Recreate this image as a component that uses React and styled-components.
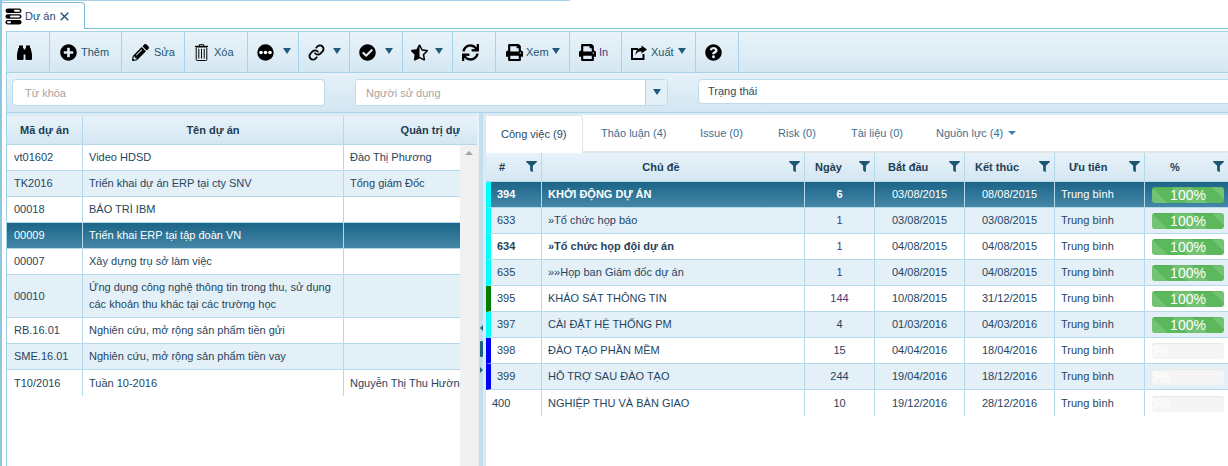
import React from "react";
import styled, { createGlobalStyle } from "styled-components";
import {
  FaPlusCircle,
  FaPencilAlt,
  FaCheckCircle,
  FaStarHalfAlt,
  FaSync,
  FaPrint,
  FaQuestionCircle,
  FaFilter,
} from "react-icons/fa";
import { Link as LinkIcon } from "lucide-react";

const GlobalStyle = createGlobalStyle`
  html, body {
    margin: 0;
    padding: 0;
    background: #fff;
    overflow: hidden;
  }
  * {
    box-sizing: border-box;
  }
`;

const Page = styled.div`
  width: 1228px;
  height: 466px;
  overflow: hidden;
  display: flex;
  flex-direction: column;
  border-left: 2px solid #8cc6e2;
  font-family: "Liberation Sans", Arial, sans-serif;
  font-size: 11px;
  color: #1f4560;
`;

const TopRule = styled.div`
  flex: none;
  width: 568px;
  height: 1px;
  background: #a6d3ea;
`;

const TabStrip = styled.div`
  flex: none;
  height: 28px;
  display: flex;
  align-items: flex-end;
  border-bottom: 1px solid #7fbcdb;
`;

const MainTab = styled.div`
  width: 83px;
  height: 27px;
  margin-bottom: -1px;
  padding-left: 3px;
  display: flex;
  align-items: center;
  gap: 3px;
  background: #fff;
  border: 1px solid #7fbcdb;
  border-left: 0;
  border-bottom: 0;
  border-top-right-radius: 4px;
  color: #1f4a68;
`;

const Frame = styled.div`
  flex: 1;
  min-height: 0;
  margin: 2px 0 0 4px;
  display: flex;
  flex-direction: column;
  border-left: 1px solid #9fd0e8;
`;

const Toolbar = styled.div`
  flex: none;
  height: 42px;
  display: flex;
  background: linear-gradient(#e9f3f9, #d5e7f3);
  border-top: 1px solid #a6d3ea;
  border-bottom: 1px solid #a6d3ea;
`;

const ToolButton = styled.div`
  flex: none;
  width: ${(p) => p.$w}px;
  padding-left: ${(p) => p.$pl ?? 9}px;
  display: flex;
  align-items: center;
  gap: ${(p) => p.$gap ?? 4}px;
  border-right: 1px solid #a6d3ea;
  color: ${(p) => p.$color ?? "#24566f"};
  svg.glyph {
    flex: none;
    color: #000;
    font-size: 17px;
  }
`;

const Caret = styled.span`
  flex: none;
  width: 0;
  height: 0;
  margin-bottom: 2px;
  border-left: 4px solid transparent;
  border-right: 4px solid transparent;
  border-top: 6px solid #1f5a7c;
`;

const FilterBar = styled.div`
  flex: none;
  height: 40px;
  padding: 6px 0 0 5px;
  display: flex;
  align-items: flex-start;
  overflow: hidden;
  background: linear-gradient(#e6f1f8, #d3e6f2);
  border-bottom: 1px solid #a9d3e8;
`;

const KeywordInput = styled.input`
  flex: none;
  width: 313px;
  height: 27px;
  padding: 0 12px;
  font: inherit;
  background: #fff;
  border: 1px solid #bcdcec;
  border-radius: 4px;
  outline: none;
  &::placeholder {
    color: #aaa39e;
    opacity: 1;
  }
`;

const UserCombo = styled.div`
  flex: none;
  width: 313px;
  height: 27px;
  margin-left: 30px;
  display: flex;
  background: #fff;
  border: 1px solid #bcdcec;
  border-radius: 4px;
  overflow: hidden;
`;

const UserInput = styled(KeywordInput)`
  flex: 1;
  width: auto;
  height: 100%;
  padding: 0 10px;
  border: 0;
  border-radius: 0;
`;

const ComboArrow = styled.div`
  flex: none;
  width: 22px;
  display: flex;
  align-items: center;
  justify-content: center;
  background: #e3eff7;
  border-left: 1px solid #a6d3ea;
`;

const StatusBox = styled.div`
  flex: none;
  width: 560px;
  height: 25px;
  margin-left: 30px;
  padding: 0 9px 2px;
  display: flex;
  align-items: center;
  background: #fff;
  border: 1px solid #bcdcec;
  border-radius: 4px;
  color: #2b4a5e;
`;

const Split = styled.div`
  flex: 1;
  min-height: 0;
  padding-top: 2px;
  display: flex;
  background: #dcebf5;
`;

const ListPanel = styled.div`
  flex: none;
  width: 470px;
  margin-top: 1px;
  display: flex;
  background: #fff;
`;

const ListClip = styled.div`
  width: 453px;
  overflow: hidden;
`;

const ScrollColumn = styled.div`
  width: 17px;
  display: flex;
  flex-direction: column;
`;

const ScrollHead = styled.div`
  flex: none;
  height: 29px;
  background: linear-gradient(#e8f2f9, #d4e7f3);
  border-bottom: 1px solid #b5d8ea;
`;

const ScrollTrack = styled.div`
  flex: 1;
  padding-top: 6px;
  display: flex;
  justify-content: center;
  background: #f1f1f1;
`;

const ScrollUp = styled.span`
  width: 0;
  height: 0;
  border-left: 4px solid transparent;
  border-right: 4px solid transparent;
  border-bottom: 4px solid #a3a3a3;
`;

const Splitter = styled.div`
  flex: none;
  width: 9px;
  margin-top: -2px;
  padding: 212px 0 0 3px;
  display: flex;
  flex-direction: column;
  align-items: flex-start;
  gap: 10px;
  background: linear-gradient(to right, #e8f2f9 0 2px, #c4deee 2px 6px, #dbebf5 6px);
`;

const SplitHandle = styled.span`
  width: 3px;
  height: 16px;
  border-radius: 1px;
  background: #1d5f80;
`;

const SplitArrow = styled.span`
  width: 0;
  height: 0;
  border-top: 3px solid transparent;
  border-bottom: 3px solid transparent;
  ${(p) =>
    p.$left ? "border-right: 3px solid #1d5f80;" : "border-left: 3px solid #1d5f80;"}
`;

const DetailPanel = styled.div`
  flex: 1;
  min-width: 0;
  display: flex;
  flex-direction: column;
  background: #fff;
`;

const DetailTabs = styled.div`
  flex: none;
  height: 38px;
  display: flex;
  background: #fff;
  border-bottom: 2px solid #e3e6e8;
`;

const DetailTab = styled.div`
  flex: none;
  width: ${(p) => p.$w}px;
  height: ${(p) => (p.$active ? 38 : 36)}px;
  display: flex;
  align-items: center;
  gap: 5px;
  padding-left: ${(p) => (p.$active ? 15 : 0)}px;
  padding-bottom: ${(p) => (p.$active ? 2 : 0)}px;
  background: #fff;
  color: ${(p) => (p.$active ? "#2b4a5e" : "#3d6f92")};
  ${(p) =>
    p.$active &&
    `
    border: 1px solid #e3e6e8;
    border-left: 0;
    border-bottom: 0;
    border-top-right-radius: 4px;
    margin-right: 18px;
  `}
`;

const TabCaret = styled.span`
  width: 0;
  height: 0;
  border-left: 4px solid transparent;
  border-right: 4px solid transparent;
  border-top: 4px solid #3d7fb0;
`;

const Grid = styled.table`
  table-layout: fixed;
  border-collapse: separate;
  border-spacing: 0;
  width: ${(p) => p.$w}px;
`;

const HeadCell = styled.th`
  position: relative;
  height: 29px;
  padding: 0 ${(p) => p.$pr ?? 0}px 0 ${(p) => p.$pl ?? 0}px;
  text-align: ${(p) => (p.$pl ? "left" : "center")};
  font-size: 11px;
  font-weight: bold;
  white-space: nowrap;
  overflow: hidden;
  color: #1e3d52;
  background: linear-gradient(#e8f2f9, #d4e7f3);
  border-right: 1px solid #b5d8ea;
  border-bottom: 1px solid #b5d8ea;
`;

const FilterIcon = styled(FaFilter)`
  position: absolute;
  top: 8px;
  right: 4px;
  font-size: 11px;
  color: #1d5673;
`;

const Row = styled.tr`
  background: ${(p) =>
    p.$selected
      ? "linear-gradient(#1b6588, #4788a9)"
      : p.$alt
      ? "#e4f0f7"
      : "#fff"};
  color: ${(p) => (p.$selected ? "#fff" : "#1f4560")};
`;

const Cell = styled.td`
  height: ${(p) => p.$h ?? 26}px;
  padding: 0 6px 0 ${(p) => p.$pl ?? 6}px;
  text-align: ${(p) => p.$align ?? "left"};
  line-height: 17px;
  font-weight: ${(p) => (p.$bold ? "bold" : "normal")};
  white-space: ${(p) => (p.$wrap ? "normal" : "nowrap")};
  overflow: hidden;
  border-right: 1px solid #b5d8ea;
  border-bottom: ${(p) => (p.$last ? "0" : "1px solid #b5d8ea")};
  ${(p) => p.$bar && `border-left: 5px solid ${p.$bar};`}
  ${(p) => p.$tint && "color: #45397a;"}
`;

const Progress = styled.div`
  width: 72px;
  height: 16px;
  margin: 1px 0 0 1px;
  border-radius: 3px;
  overflow: hidden;
  text-align: ${(p) => (p.$done ? "center" : "left")};
  text-indent: ${(p) => (p.$done ? 0 : -3)}px;
  font-size: 14px;
  line-height: 17px;
  color: #fff;
  box-shadow: inset 0 1px 1px rgba(0, 0, 0, 0.06);
  background: ${(p) =>
    p.$done
      ? `linear-gradient(45deg, #5cb85c 25%, #72c372 25%, #72c372 50%, #5cb85c 50%, #5cb85c 75%, #72c372 75%) 0 0 / 40px 40px`
      : "#f5f5f5"};
`;

const projects = [
  ["vt01602", "Video HDSD", "Đào Thị Phương"],
  ["TK2016", "Triển khai dự án ERP tại cty SNV", "Tổng giám Đốc"],
  ["00018", "BẢO TRÌ IBM", ""],
  ["00009", "Triển khai ERP tại tập đoàn VN", ""],
  ["00007", "Xây dựng trụ sở làm việc", ""],
  ["00010", "Ứng dụng công nghệ thông tin trong thu, sử dụng các khoản thu khác tại các trường học", ""],
  ["RB.16.01", "Nghiên cứu, mở rộng sản phẩm tiền gửi", ""],
  ["SME.16.01", "Nghiên cứu, mở rộng sản phẩm tiền vay", ""],
  ["T10/2016", "Tuần 10-2016", "Nguyễn Thị Thu Hường"],
];

const CYAN = "#00ffff";
const GREEN = "#007f00";
const BLUE = "#0000ff";

const tasks = [
  { id: "394", name: "KHỞI ĐỘNG DỰ ÁN", days: 6, from: "03/08/2015", to: "08/08/2015", pct: 100, bar: CYAN, selected: true, bold: true },
  { id: "633", name: "»Tổ chức họp báo", days: 1, from: "03/08/2015", to: "03/08/2015", pct: 100, bar: CYAN, alt: true, tint: true },
  { id: "634", name: "»Tổ chức họp đội dự án", days: 1, from: "04/08/2015", to: "04/08/2015", pct: 100, bar: CYAN, bold: true, tint: true },
  { id: "635", name: "»»Họp ban Giám đốc dự án", days: 1, from: "04/08/2015", to: "04/08/2015", pct: 100, bar: CYAN, alt: true, tint: true },
  { id: "395", name: "KHẢO SÁT THÔNG TIN", days: 144, from: "10/08/2015", to: "31/12/2015", pct: 100, bar: GREEN, tint: true },
  { id: "397", name: "CÀI ĐẶT HỆ THỐNG PM", days: 4, from: "01/03/2016", to: "04/03/2016", pct: 100, bar: CYAN, alt: true },
  { id: "398", name: "ĐÀO TẠO PHẦN MỀM", days: 15, from: "04/04/2016", to: "18/04/2016", pct: 0, bar: BLUE },
  { id: "399", name: "HỖ TRỢ SAU ĐÀO TẠO", days: 244, from: "19/04/2016", to: "18/12/2016", pct: 0, bar: BLUE, alt: true },
  { id: "400", name: "NGHIỆP THU VÀ BÀN GIAO", days: 10, from: "19/12/2016", to: "28/12/2016", pct: 0, last: true },
];

const taskColumns = [
  { label: "#", width: 56, pl: 13 },
  { label: "Chủ đề", width: 263, pr: 24 },
  { label: "Ngày", width: 70, pl: 10 },
  { label: "Bắt đầu", width: 90, pl: 13 },
  { label: "Kết thúc", width: 90, pl: 10 },
  { label: "Ưu tiên", width: 90, pl: 14 },
  { label: "%", width: 84, pl: 25 },
];

function PillsIcon() {
  return (
    <svg width="17" height="17" viewBox="0 0 17 17">
      <rect x="0.5" y="0.5" width="16" height="4.4" rx="2.2" fill="#000" />
      <rect x="0.5" y="6.3" width="16" height="4.4" rx="2.2" fill="#000" />
      <rect x="0.5" y="12.1" width="16" height="4.4" rx="2.2" fill="#000" />
      <rect x="9" y="1.7" width="6" height="2" rx="1" fill="#fff" />
      <rect x="5" y="7.5" width="10" height="2" rx="1" fill="#fff" />
      <rect x="2" y="13.3" width="4" height="2" rx="1" fill="#fff" />
    </svg>
  );
}

function CloseIcon() {
  return (
    <svg width="9" height="9" viewBox="0 0 9 9" style={{ marginLeft: 1 }}>
      <path d="M0.7 0.7 L8.3 8.3 M8.3 0.7 L0.7 8.3" stroke="#1f4a68" strokeWidth="1.3" />
    </svg>
  );
}

function BinocularsIcon() {
  return (
    <svg width="15" height="15" viewBox="0 0 15 15">
      <path
        d="M2 0.5 H6 V3 H6.6 V14 a1 1 0 0 1 -1 1 H1 a1 1 0 0 1 -1 -1 V9 L1.4 3 H2 Z M13 0.5 H9 V3 H8.4 V14 a1 1 0 0 0 1 1 H14 a1 1 0 0 0 1 -1 V9 L13.6 3 H13 Z M6.6 4.5 H8.4 V9.5 H6.6 Z"
        fill="#000"
      />
    </svg>
  );
}

function TrashIcon() {
  return (
    <svg width="13" height="17" viewBox="0 0 13 17">
      <path d="M4.3 2.2 V0.7 H8.7 V2.2" fill="none" stroke="#000" strokeWidth="1" />
      <path d="M0 2.4 H13" stroke="#000" strokeWidth="1.2" />
      <rect x="1.2" y="3" width="10.6" height="13.5" rx="1" fill="none" stroke="#000" strokeWidth="1" />
      <path d="M3.8 4.8 V14.5 M6.5 4.8 V14.5 M9.2 4.8 V14.5" stroke="#000" strokeWidth="1" />
    </svg>
  );
}

function DotsIcon() {
  return (
    <svg width="17" height="17" viewBox="0 0 17 17">
      <circle cx="8.5" cy="8.5" r="8.2" fill="#000" />
      <circle cx="4" cy="8.5" r="1.8" fill="#fff" />
      <circle cx="8.5" cy="8.5" r="1.8" fill="#fff" />
      <circle cx="13" cy="8.5" r="1.8" fill="#fff" />
    </svg>
  );
}

function ShareIcon() {
  return (
    <svg width="16" height="15" viewBox="0 0 16 15">
      <path d="M7 4 H1 V14 H12.5 V9" fill="none" stroke="#000" strokeWidth="2" />
      <path d="M10.5 0.5 L16 4.5 L10.5 8.5 V6.2 C7.5 6.2 5.5 7.5 4.5 10.5 C4.5 6 7 3 10.5 2.8 Z" fill="#000" />
    </svg>
  );
}

function App() {
  return (
    <>
      <GlobalStyle />
      <Page>
        <TopRule />
        <TabStrip>
          <MainTab>
            <PillsIcon />
            Dự án
            <CloseIcon />
          </MainTab>
        </TabStrip>
        <Frame>
          <Toolbar>
            <ToolButton $w={43} $pl={10}><BinocularsIcon /></ToolButton>
            <ToolButton $w={72} $pl={10}><FaPlusCircle className="glyph" />Thêm</ToolButton>
            <ToolButton $w={63} $pl={10} $gap={5}><FaPencilAlt className="glyph" />Sửa</ToolButton>
            <ToolButton $w={63} $pl={10} $gap={6}><TrashIcon />Xóa</ToolButton>
            <ToolButton $w={51} $gap={9}><DotsIcon /><Caret /></ToolButton>
            <ToolButton $w={51} $gap={8}><LinkIcon size={17} strokeWidth={2.6} color="#000" /><Caret /></ToolButton>
            <ToolButton $w={53} $gap={9}><FaCheckCircle className="glyph" /><Caret /></ToolButton>
            <ToolButton $w={50} $pl={8} $gap={7}><FaStarHalfAlt className="glyph" /><Caret /></ToolButton>
            <ToolButton $w={43}><FaSync className="glyph" /></ToolButton>
            <ToolButton $w={74} $pl={10} $gap={3}><FaPrint className="glyph" />Xem<Caret /></ToolButton>
            <ToolButton $w={52} $gap={3} $color="#45397a"><FaPrint className="glyph" />In</ToolButton>
            <ToolButton $w={74} $gap={4}><ShareIcon />Xuất<Caret /></ToolButton>
            <ToolButton $w={43}><FaQuestionCircle className="glyph" /></ToolButton>
          </Toolbar>
          <FilterBar>
            <KeywordInput placeholder="Từ khóa" readOnly />
            <UserCombo>
              <UserInput placeholder="Người sử dụng" readOnly />
              <ComboArrow><Caret /></ComboArrow>
            </UserCombo>
            <StatusBox>Trạng thái</StatusBox>
          </FilterBar>
          <Split>
            <ListPanel>
              <ListClip>
                <Grid $w={527}>
                  <colgroup>
                    <col width="76" />
                    <col width="261" />
                    <col width="190" />
                  </colgroup>
                  <thead>
                    <tr>
                      <HeadCell>Mã dự án</HeadCell>
                      <HeadCell>Tên dự án</HeadCell>
                      <HeadCell>Quản trị dự án</HeadCell>
                    </tr>
                  </thead>
                  <tbody>
                    {projects.map((p, i) => {
                      const last = i === projects.length - 1;
                      return (
                        <Row key={p[0]} $alt={i % 2 === 1} $selected={i === 3}>
                          <Cell $pl={7} $last={last}>{p[0]}</Cell>
                          <Cell $wrap $h={i === 5 ? 43 : 26} $last={last}>{p[1]}</Cell>
                          <Cell $last={last}>{p[2]}</Cell>
                        </Row>
                      );
                    })}
                  </tbody>
                </Grid>
              </ListClip>
              <ScrollColumn>
                <ScrollHead />
                <ScrollTrack><ScrollUp /></ScrollTrack>
              </ScrollColumn>
            </ListPanel>
            <Splitter>
              <SplitArrow $left />
              <SplitHandle />
              <SplitArrow />
            </Splitter>
            <DetailPanel>
              <DetailTabs>
                <DetailTab $active $w={97}>Công việc (9)</DetailTab>
                <DetailTab $w={99}>Thảo luận (4)</DetailTab>
                <DetailTab $w={78}>Issue (0)</DetailTab>
                <DetailTab $w={73}>Risk (0)</DetailTab>
                <DetailTab $w={85}>Tài liệu (0)</DetailTab>
                <DetailTab $w={100}>Nguồn lực (4)<TabCaret /></DetailTab>
              </DetailTabs>
              <Grid $w={743}>
                <colgroup>
                  {taskColumns.map((c) => <col key={c.label} width={c.width} />)}
                </colgroup>
                <thead>
                  <tr>
                    {taskColumns.map((c) => (
                      <HeadCell key={c.label} $pl={c.pl} $pr={c.pr}>
                        {c.label}
                        <FilterIcon />
                      </HeadCell>
                    ))}
                  </tr>
                </thead>
                <tbody>
                  {tasks.map((t) => (
                    <Row key={t.id} $alt={t.alt} $selected={t.selected}>
                      <Cell $bar={t.bar} $last={t.last} $bold={t.bold}>{t.id}</Cell>
                      <Cell $last={t.last} $bold={t.bold}>{t.name}</Cell>
                      <Cell $align="center" $last={t.last} $bold={t.selected} $tint={t.tint}>{t.days}</Cell>
                      <Cell $align="center" $last={t.last}>{t.from}</Cell>
                      <Cell $align="center" $last={t.last}>{t.to}</Cell>
                      <Cell $last={t.last}>Trung bình</Cell>
                      <Cell $last={t.last}>
                        <Progress $done={t.pct === 100}>{t.pct}%</Progress>
                      </Cell>
                    </Row>
                  ))}
                </tbody>
              </Grid>
            </DetailPanel>
          </Split>
        </Frame>
      </Page>
    </>
  );
}

export default App;
